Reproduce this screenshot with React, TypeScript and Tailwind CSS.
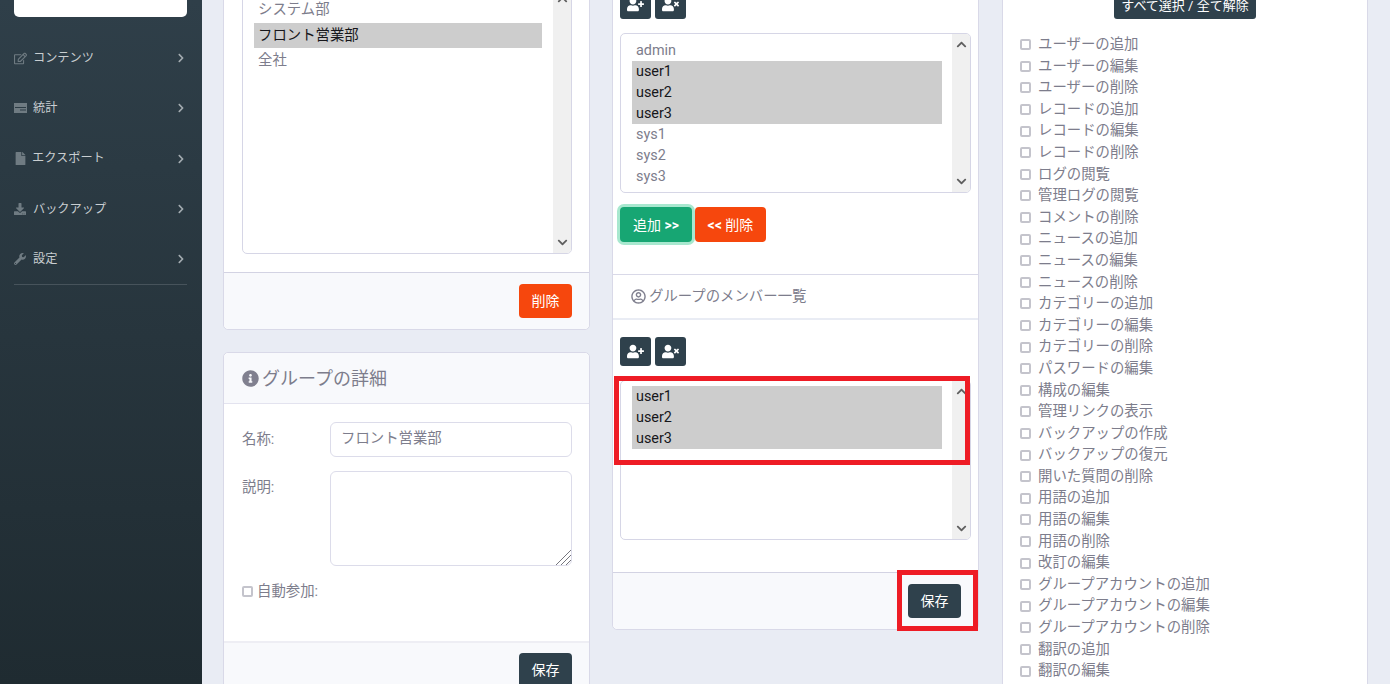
import React from 'react';
import { FaChevronRight, FaDownload, FaFile, FaInfoCircle, FaRegEdit, FaRegUserCircle, FaUserPlus, FaUserTimes, FaWrench, FaChevronUp, FaChevronDown } from 'react-icons/fa';

const font = "font-['Roboto','Noto_Sans_CJK_JP',sans-serif]";

// the stats icon has no close match in the packages
const StatsIcon = () => (
  <svg width="13" height="10" viewBox="0 0 13 10" fill="currentColor">
    <path d="M0 0h13v10H0z M1 4v1h11V4z M6 6.5v1h6v-1z" fillRule="evenodd" />
  </svg>
);

const menu = [
  { label: 'コンテンツ', icon: <FaRegEdit size={13} />, labelClass: '' },
  { label: '統計', icon: <StatsIcon />, labelClass: '' },
  { label: 'エクスポート', icon: <FaFile size={13} />, labelClass: '-ml-[1px]' },
  { label: 'バックアップ', icon: <FaDownload size={12} />, labelClass: '' },
  { label: '設定', icon: <FaWrench size={12} />, labelClass: '' },
];

const perms = [
  'ユーザーの追加', 'ユーザーの編集', 'ユーザーの削除',
  'レコードの追加', 'レコードの編集', 'レコードの削除',
  'ログの閲覧', '管理ログの閲覧', 'コメントの削除',
  'ニュースの追加', 'ニュースの編集', 'ニュースの削除',
  'カテゴリーの追加', 'カテゴリーの編集', 'カテゴリーの削除',
  'パスワードの編集', '構成の編集', '管理リンクの表示',
  'バックアップの作成', 'バックアップの復元', '開いた質問の削除',
  '用語の追加', '用語の編集', '用語の削除', '改訂の編集',
  'グループアカウントの追加', 'グループアカウントの編集', 'グループアカウントの削除',
  '翻訳の追加', '翻訳の編集',
];

function ListBox({ items, selected, className, rowClass }: { items: string[]; selected: string[]; className: string; rowClass: string }) {
  return (
    <div className={`flex border border-[#d6d6e6] rounded-[5px] bg-white overflow-hidden ${className}`}>
      <div className="flex-1 min-w-0 pl-[11px] pr-[10px]">
        {items.map((it) => (
          <div key={it} className={`${rowClass} px-1 ${selected.includes(it) ? 'bg-[#cdcdcd] text-[#16161a]' : 'text-[#7d7d8c]'}`}>{it}</div>
        ))}
      </div>
      <div className="w-[18px] bg-[#f0f0f0] flex flex-col justify-between items-center py-[5px] text-[#5f5f5f]">
        <FaChevronUp size={11} />
        <FaChevronDown size={11} />
      </div>
    </div>
  );
}

function DarkBtn({ children }: { children: React.ReactNode }) {
  return <button className="w-[31px] h-[29px] rounded-[3px] bg-[#2f414c] text-white flex items-center justify-center">{children}</button>;
}

export default function App() {
  return (
    <div className={`${font} relative flex h-[684px] w-[1390px] overflow-hidden bg-[#e9ecf4] text-[14.4px] text-[#7d7d8c]`}>
      {/* Sidebar */}
      <aside className="w-[202px] shrink-0 bg-gradient-to-b from-[#2f3f49] to-[#1f2b31] pl-[14px] pr-[15px]">
        <div className="h-[17px] bg-white rounded-b-[5px]" />
        <nav className="mt-[16px]">
          {menu.map((m) => (
            <div key={m.label} className="h-[50.25px] flex items-center text-[12.2px] text-[#c9ced1]">
              <span className="w-[19px] flex text-[#6f7b82]">{m.icon}</span>
              <span className={`flex-1 ${m.labelClass}`}>{m.label}</span>
              <FaChevronRight size={10} className="mr-[1px] text-[#a3abb0]" />
            </div>
          ))}
        </nav>
        <div className="border-t border-[#47535b]" />
      </aside>

      {/* Main */}
      <main className="flex-1 flex gap-[22px] pl-[21px] items-start">
        {/* Left column */}
        <div className="w-[367px] shrink-0 flex flex-col gap-[22px]">
          <section className="-mt-[31px] bg-white border border-[#d9d9e8] rounded-b-[5px]">
            <div className="pl-[18px] pr-[17px] py-[18px]">
              <ListBox items={['システム部', 'フロント営業部', '全社']} selected={['フロント営業部']} className="h-[266px]" rowClass="h-[25.5px] leading-[25.5px] first:mt-[8px] mr-[1px]" />
            </div>
            <div className="h-[57px] border-t border-[#d3d3e3] bg-[#f8f9fc] rounded-b-[5px] flex items-center justify-end pr-[17px]">
              <button className="w-[53px] h-[34px] rounded-[4px] bg-[#f6470d] text-white text-sm">削除</button>
            </div>
          </section>
          <section className="bg-white border border-[#d9d9e8] rounded-[5px]">
            <header className="h-[51px] flex items-center gap-[3px] px-[18px] bg-[#f8f9fc] border-b border-[#e3e3ef] rounded-t-[5px] text-[18px]">
              <FaInfoCircle size={17} className="text-[#80808f]" />
              <span>グループの詳細</span>
            </header>
            <div className="h-[237px] pl-[18px] pr-[17px] pt-[18px]">
              <div className="flex">
                <label className="w-[88px] pt-[7px]">名称:</label>
                <div className="flex-1 h-[35px] border border-[#dcdcea] rounded-[6px] px-[10px] leading-[31px]">フロント営業部</div>
              </div>
              <div className="flex mt-[14px]">
                <label className="w-[88px] pt-[6px]">説明:</label>
                <div className="relative flex-1 h-[95px]">
                  <textarea className="w-full h-full border border-[#dcdcea] rounded-[6px] resize-none block" />
                  <svg className="absolute right-[1px] bottom-[1px]" width="15" height="15" viewBox="0 0 15 15" stroke="#77777f" strokeWidth="1">
                    <path d="M0 15 15 0M5 15 15 5M10 15l5-5" />
                  </svg>
                </div>
              </div>
              <div className="flex items-center gap-[4px] mt-[15px]">
                <span className="w-[11px] h-[11px] border-2 border-[#c4c4cc] rounded-[2px]" />
                <span>自動参加:</span>
              </div>
            </div>
            <div className="h-[80px] border-t-2 border-[#eeeef4] bg-[#f8f9fc] flex justify-end pr-[17px] pt-[10px]">
              <button className="w-[53px] h-[34px] rounded-[4px] bg-[#2f414c] text-white text-sm">保存</button>
            </div>
          </section>
        </div>

        {/* Middle column */}
        <div className="w-[367px] shrink-0">
          <section className="-mt-[21px] bg-white border border-[#d9d9e8] rounded-b-[5px]">
            <div className="px-[7px] pb-[32px]">
              <div className="flex items-end gap-[4px] h-[39px]">
                <DarkBtn><FaUserPlus size={17} /></DarkBtn>
                <DarkBtn><FaUserTimes size={17} /></DarkBtn>
              </div>
              <div className="mt-[14px]">
                <ListBox items={['admin', 'user1', 'user2', 'user3', 'sys1', 'sys2', 'sys3']} selected={['user1', 'user2', 'user3']} className="h-[160px]" rowClass="h-[21px] leading-[21px] first:mt-[6px]" />
              </div>
              <div className="flex gap-[3px] mt-[14px]">
                <button className="w-[72px] h-[35px] rounded-[4px] bg-[#17a673] text-white text-sm ring-[3px] ring-[#a8e8cf]">追加 <span className="font-bold">&gt;&gt;</span></button>
                <button className="w-[71px] h-[35px] rounded-[4px] bg-[#f6470d] text-white text-sm"><span className="font-bold">&lt;&lt;</span> 削除</button>
              </div>
            </div>
            <div className="h-[46px] border-t border-[#d9d9e8] border-b-2 border-b-[#e9ecf4] flex items-center gap-[3px] px-[18px]">
              <FaRegUserCircle size={15} className="text-[#80808f]" />
              <span>グループのメンバー一覧</span>
            </div>
            <div className="px-[7px] pt-[17px] pb-[32px]">
              <div className="flex gap-[4px] h-[29px]">
                <DarkBtn><FaUserPlus size={17} /></DarkBtn>
                <DarkBtn><FaUserTimes size={17} /></DarkBtn>
              </div>
              <div className="mt-[14px]">
                <ListBox items={['user1', 'user2', 'user3']} selected={['user1', 'user2', 'user3']} className="h-[160px]" rowClass="h-[21px] leading-[21px] first:mt-[5px]" />
              </div>
            </div>
            <div className="h-[57px] border-t border-[#d3d3e3] bg-[#f8f9fc] rounded-b-[5px] flex items-center justify-end pr-[17px]">
              <button className="w-[53px] h-[34px] rounded-[4px] bg-[#2f414c] text-white text-sm">保存</button>
            </div>
          </section>
        </div>

        {/* Right column */}
        <div className="w-[366px] ml-[1px] shrink-0">
          <section className="-mt-[21px] bg-white border border-[#d9d9e8] h-[720px] px-[17px]">
            <div className="flex justify-center">
              <button className="w-[142px] h-[39px] pt-[13px] rounded-[3px] bg-[#2f414c] text-white text-[13px] leading-[22px]">すべて選択 / 全て解除</button>
            </div>
            <ul className="mt-[15px]">
              {perms.map((p) => (
                <li key={p} className="h-[21.6px] flex items-center gap-[7px]">
                  <span className="w-[11px] h-[11px] border-2 border-[#c4c4cc] rounded-[2px]" />
                  <span>{p}</span>
                </li>
              ))}
            </ul>
          </section>
        </div>
      </main>

      {/* Red annotation boxes */}
      <div className="absolute left-[614px] top-[376px] w-[356px] h-[89px] border-[5px] border-[#ee1c25]" />
      <div className="absolute left-[897px] top-[570px] w-[81px] h-[61px] border-[5px] border-[#ee1c25]" />
    </div>
  );
}
